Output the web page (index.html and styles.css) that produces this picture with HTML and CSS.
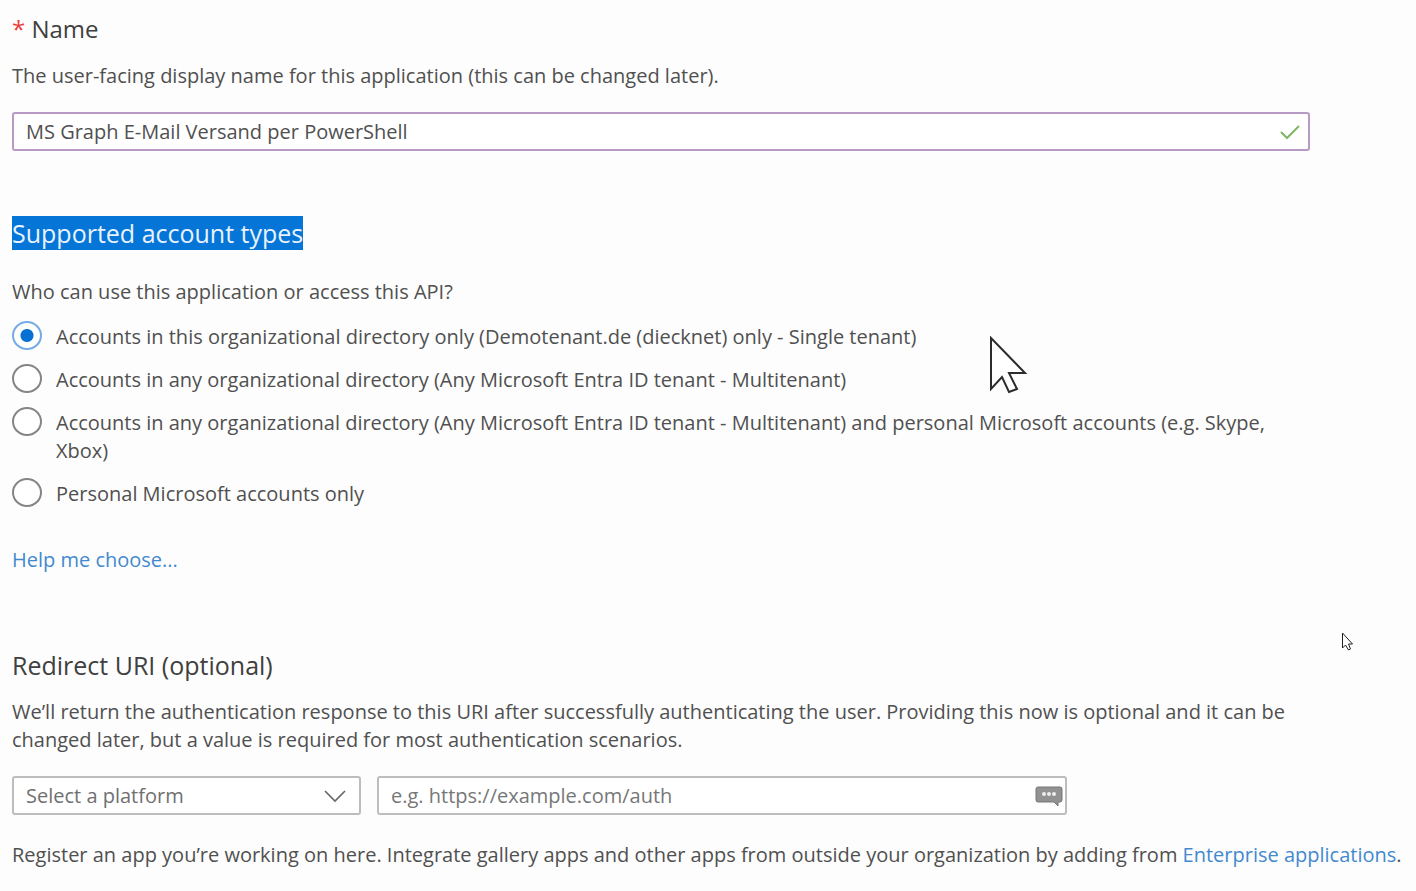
FILE: index.html
```html
<!DOCTYPE html>
<html lang="en">
<head>
<meta charset="utf-8">
<title>Register an application</title>
<link rel="stylesheet" href="styles.css">
</head>
<body>
<main class="page">
  <section class="section">
    <h2 class="heading heading-name"><label for="app-name"><span class="required">*</span> Name</label></h2>
    <p class="text">The user-facing display name for this application (this can be changed later).</p>
    <div class="field field-name">
      <input class="control control-valid" id="app-name" type="text" value="MS Graph E-Mail Versand per PowerShell">
      <svg class="field-icon" width="20" height="16" viewBox="0 0 20 16" aria-hidden="true"><path d="M1 8l6 6L19 2" fill="none" stroke="#7fb765" stroke-width="2"/></svg>
    </div>
  </section>

  <section class="section section-types">
    <h2 class="heading" id="types"><span class="selected">Supported account types</span></h2>
    <p class="text" id="who">Who can use this application or access this API?</p>
    <div class="options" role="radiogroup" aria-labelledby="who">
      <label class="option"><input class="radio" type="radio" name="type" checked><span class="option-text">Accounts in this organizational directory only (Demotenant.de (diecknet) only - Single tenant)</span></label>
      <label class="option"><input class="radio" type="radio" name="type"><span class="option-text">Accounts in any organizational directory (Any Microsoft Entra ID tenant - Multitenant)</span></label>
      <label class="option"><input class="radio" type="radio" name="type"><span class="option-text">Accounts in any organizational directory (Any Microsoft Entra ID tenant - Multitenant) and personal Microsoft accounts (e.g. Skype, Xbox)</span></label>
      <label class="option"><input class="radio" type="radio" name="type"><span class="option-text">Personal Microsoft accounts only</span></label>
    </div>
    <p class="text help"><a class="link" href="#help">Help me choose...</a></p>
  </section>

  <section class="section section-redirect">
    <h2 class="heading">Redirect URI (optional)</h2>
    <p class="text intro">We’ll return the authentication response to this URI after successfully authenticating the user. Providing this now is optional and it can be changed later, but a value is required for most authentication scenarios.</p>
    <div class="row">
      <div class="field field-platform">
        <select class="control" aria-label="Platform"><option>Select a platform</option></select>
        <svg class="field-icon" width="22" height="14" viewBox="0 0 22 14" aria-hidden="true"><path d="M1 2l10 10L21 2" fill="none" stroke="#666" stroke-width="1.6"/></svg>
      </div>
      <div class="field field-uri">
        <input class="control" type="text" aria-label="Redirect URI" placeholder="e.g. https://example.com/auth">
        <svg class="field-icon field-icon-edge" width="28" height="20" viewBox="0 0 28 20" aria-hidden="true"><path d="M3 1h22q2 0 2 2v11q0 2-2 2h-2v4l-4-4H3q-2 0-2-2V3q0-2 2-2z" fill="#929292" stroke="#777"/><g fill="#eee"><circle cx="9" cy="8" r="2"/><circle cx="14" cy="8" r="2"/><circle cx="19" cy="8" r="2"/></g></svg>
      </div>
    </div>
    <p class="text note">Register an app you’re working on here. Integrate gallery apps and other apps from outside your organization by adding from <a class="link" href="#enterprise">Enterprise applications</a>.</p>
  </section>
</main>
<svg class="pointer pointer-large" width="40" height="60" viewBox="0 0 40 60" aria-hidden="true"><path d="M2 2v51l11-12 7 15 8-3-8-16h16z" fill="#fff" stroke="#2c2c2c" stroke-width="2"/></svg>
<svg class="pointer pointer-small" width="13" height="20" viewBox="0 0 13 20" aria-hidden="true"><path d="M1.500 1v15l3-3 3 5 2-1-2-5h4z" fill="#fff" stroke="#222"/></svg>
</body>
</html>
```
FILE: styles.css
```css
* { box-sizing: border-box; }

body {
  margin: 0;
  background: #fdfdfd;
  color: #505050;
  font-family: "Open Sans", "Noto Sans", sans-serif;
  font-size: 20px;
  line-height: 28px;
}

.page { padding: 12px 12px 20px; }
.section-types { margin-top: 65px; }
.section-redirect { margin-top: 74px; }

.heading {
  margin: 0 0 16px;
  font-size: 25px;
  font-weight: 400;
  line-height: 34px;
  color: #404040;
}
.heading-name { font-size: 24px; }
.section-types .heading { margin-bottom: 28px; }
.required { color: #e8403c; }
.selected {
  display: inline-block;
  background: #0575d8;
  color: #e8f3fd;
}

.text { margin: 0; }
.intro { max-width: 1290px; }
.note { margin-top: 26px; }
.help { margin-top: 38px; }
.link { color: #4389cf; text-decoration: none; }

.field { display: grid; align-items: center; }
.field > * { grid-area: 1 / 1; }
.field-name { margin-top: 22px; max-width: 1298px; }
.field-icon { justify-self: end; margin-right: 10px; pointer-events: none; }
.field-platform .field-icon { margin-right: 15px; }
.field-icon-edge { margin-right: 4px; }

.control {
  width: 100%;
  height: 39px;
  padding: 0 12px;
  border: 2px solid #bdbdbd;
  border-radius: 3px;
  background: #fff;
  color: #505050;
  font: inherit;
  appearance: none;
}
select.control { color: #707070; }
.control::placeholder { color: #777; opacity: 1; }
.control-valid { border-color: #b79bc4; }

.options {
  display: flex;
  flex-direction: column;
  gap: 13px;
  max-width: 1290px;
  margin-top: 15px;
}
.option { display: flex; align-items: flex-start; gap: 14px; }
.option-text { padding-top: 2px; }
.radio {
  flex: none;
  width: 30px;
  height: 29px;
  margin: 0;
  border: 2px solid #858585;
  border-radius: 50%;
  background: #fff;
  appearance: none;
}
.radio:checked {
  border-color: #75aae6;
  background: radial-gradient(circle, #0870d2 6px, #fff 7px);
}

.row {
  display: grid;
  grid-template-columns: 349fr 690fr;
  gap: 16px;
  max-width: 1055px;
  margin-top: 22px;
}

.pointer { position: absolute; }
.pointer-large { left: 989px; top: 336px; }
.pointer-small { left: 1341px; top: 632px; }
```
